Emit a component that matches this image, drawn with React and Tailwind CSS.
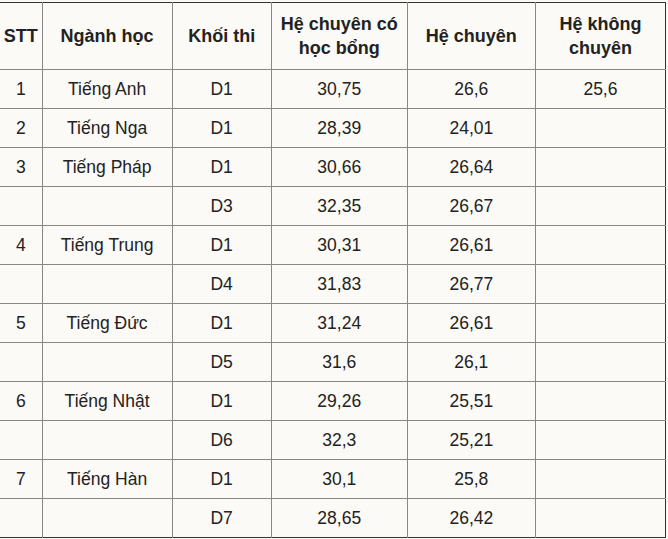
import React from "react";

const rows = [
  ["1", "Tiếng Anh", "D1", "30,75", "26,6", "25,6"],
  ["2", "Tiếng Nga", "D1", "28,39", "24,01", ""],
  ["3", "Tiếng Pháp", "D1", "30,66", "26,64", ""],
  ["", "", "D3", "32,35", "26,67", ""],
  ["4", "Tiếng Trung", "D1", "30,31", "26,61", ""],
  ["", "", "D4", "31,83", "26,77", ""],
  ["5", "Tiếng Đức", "D1", "31,24", "26,61", ""],
  ["", "", "D5", "31,6", "26,1", ""],
  ["6", "Tiếng Nhật", "D1", "29,26", "25,51", ""],
  ["", "", "D6", "32,3", "25,21", ""],
  ["7", "Tiếng Hàn", "D1", "30,1", "25,8", ""],
  ["", "", "D7", "28,65", "26,42", ""],
];

const widths = ["w-[42px]", "w-[130px]", "w-[99px]", "w-[136px]", "w-[128px]", "w-[130px]"];

export default function App() {
  return (
    <div
      className="w-[668px] h-[539px] bg-[#fbfaf6] pt-[2px] text-[#222] overflow-hidden"
      style={{ fontFamily: '"Liberation Sans", Arial, sans-serif' }}
    >
      <table className="table-fixed border-collapse w-[666px] text-[17.5px] leading-[24px] border-t border-b border-r border-[#333]">
        <colgroup>
          {widths.map((w, i) => (
            <col key={i} className={w} />
          ))}
        </colgroup>
        <thead>
          <tr className="h-[67px] font-bold text-[18px]">
            <th className="border-r border-b border-[#888] px-0">STT</th>
            <th className="border-r border-b border-[#888]">Ngành học</th>
            <th className="border-r border-b border-[#888]">Khối thi</th>
            <th className="border-r border-b border-[#888]">
              Hệ chuyên có
              <br />
              học bổng
            </th>
            <th className="border-r border-b border-[#888]">Hệ chuyên</th>
            <th className="border-b border-[#888]">
              Hệ không
              <br />
              chuyên
            </th>
          </tr>
        </thead>
        <tbody>
          {rows.map((r, i) => (
            <tr key={i} className="h-[39px]">
              {r.map((c, j) => (
                <td
                  key={j}
                  className={
                    "text-center p-0 " +
                    (i < rows.length - 1 ? "border-b border-[#888] " : "") +
                    (j < 5 ? "border-r border-[#888]" : "")
                  }
                >
                  {c}
                </td>
              ))}
            </tr>
          ))}
        </tbody>
      </table>
    </div>
  );
}
